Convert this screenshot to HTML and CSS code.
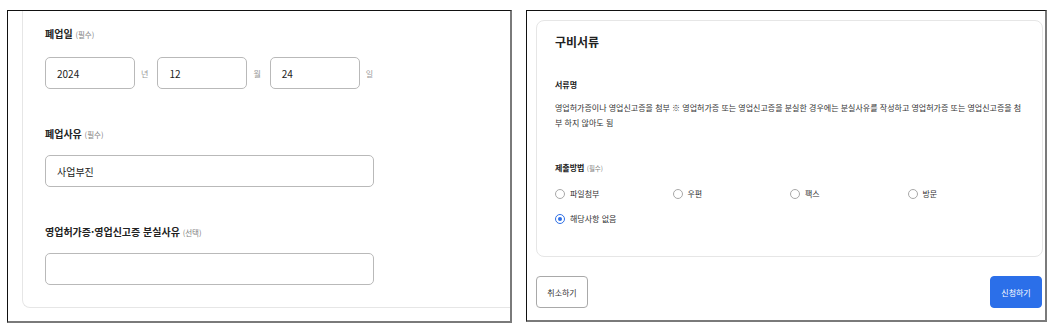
FILE: index.html
```html
<!DOCTYPE html>
<html lang="ko">
<head>
<meta charset="utf-8">
<link rel="stylesheet" href="styles.css">
</head>
<body>
<div class="page">
  <section class="panel panel-left">
    <div class="form-card">
      <div class="field field-first">
        <div class="label">폐업일 <span class="req">(필수)</span></div>
        <div class="date-row">
          <div class="input input-short">2024</div><span class="unit">년</span>
          <div class="input input-short">12</div><span class="unit">월</span>
          <div class="input input-short">24</div><span class="unit">일</span>
        </div>
      </div>
      <div class="field">
        <div class="label">폐업사유 <span class="req">(필수)</span></div>
        <div class="input input-wide">사업부진</div>
      </div>
      <div class="field">
        <div class="label">영업허가증·영업신고증 분실사유 <span class="req">(선택)</span></div>
        <div class="input input-wide"></div>
      </div>
    </div>
  </section>
  <section class="panel panel-right">
    <div class="doc-card">
      <h2 class="doc-title">구비서류</h2>
      <div class="sub-label">서류명</div>
      <p class="doc-text">영업허가증이나 영업신고증을 첨부 ※ 영업허가증 또는 영업신고증을 분실한 경우에는 분실사유를 작성하고 영업허가증 또는 영업신고증을 첨부 하지 않아도 됨</p>
      <div class="sub-label method-label">제출방법 <span class="req-sm">(필수)</span></div>
      <div class="radio-grid">
        <div class="radio"><span class="circle"></span>파일첨부</div>
        <div class="radio"><span class="circle"></span>우편</div>
        <div class="radio"><span class="circle"></span>팩스</div>
        <div class="radio"><span class="circle"></span>방문</div>
        <div class="radio"><span class="circle checked"></span>해당사항 없음</div>
      </div>
    </div>
    <div class="actions">
      <button class="btn btn-cancel">취소하기</button>
      <button class="btn btn-submit">신청하기</button>
    </div>
  </section>
</div>
</body>
</html>
```
FILE: styles.css
```css
* { box-sizing: border-box; }
html, body { margin: 0; padding: 0; background: #fff; }
body {
  font-family: "Noto Sans CJK KR", "Noto Sans", sans-serif;
  color: #222;
  width: 1056px;
  height: 336px;
  overflow: hidden;
}
.page {
  display: flex;
  align-items: flex-start;
  padding: 10px 0 0 7px;
  gap: 14px;
}
.panel {
  border-top: 1px solid #111;
  border-left: 1px solid #111;
  border-right: 2px solid #7a7a7a;
  border-bottom: 2px solid #7a7a7a;
  background: #fff;
  overflow: hidden;
}
.panel-left {
  width: 505px;
  height: 313px;
  padding-left: 14px;
}
.form-card {
  height: 297px;
  border-left: 1px solid #e6e6e6;
  border-bottom: 1px solid #e6e6e6;
  border-bottom-left-radius: 8px;
  padding: 16px 0 0 22px;
}
.field { margin-bottom: 38px; }
.label {
  font-size: 10px;
  font-weight: 700;
  line-height: 14px;
  height: 14px;
  margin-bottom: 14px;
  color: #222;
  white-space: nowrap;
}
.field-first .label { margin-bottom: 16px; }
.req {
  font-size: 7.5px;
  font-weight: 400;
  color: #808080;
}
.date-row {
  display: flex;
  align-items: center;
}
.input {
  height: 32px;
  border: 1px solid #b9b9b9;
  border-radius: 5px;
  padding: 0 11px;
  display: flex;
  align-items: center;
  font-size: 10px;
  color: #222;
  background: #fff;
}
.input-short { width: 90px; }
.input-wide { width: 329px; }
.unit {
  font-size: 8px;
  color: #999;
  margin: 0 9px 0 6px;
}
.panel-right {
  width: 521px;
  height: 312px;
  padding: 9px 2px 0 9px;
}
.doc-card {
  height: 237px;
  border: 1px solid #e6e6e6;
  border-radius: 8px;
  padding: 12px 16px 0 18px;
}
.doc-title {
  margin: 0;
  font-size: 12px;
  font-weight: 700;
  line-height: 17px;
  color: #222;
}
.sub-label {
  font-size: 8px;
  font-weight: 700;
  line-height: 12px;
  color: #222;
}
.doc-title + .sub-label { margin-top: 29px; }
.doc-text {
  margin: 9px 0 0;
  font-size: 8px;
  line-height: 15px;
  color: #333;
}
.method-label { margin-top: 32px; }
.req-sm {
  font-size: 6.5px;
  font-weight: 400;
  color: #808080;
}
.radio-grid {
  display: grid;
  grid-template-columns: repeat(4, 117.5px);
  row-gap: 13px;
  margin-top: 14px;
}
.radio {
  display: flex;
  align-items: center;
  font-size: 8px;
  line-height: 12px;
  color: #333;
}
.circle {
  width: 10px;
  height: 10px;
  border: 1px solid #a8a8a8;
  border-radius: 50%;
  margin-right: 5px;
  display: flex;
  align-items: center;
  justify-content: center;
}
.circle.checked { border-color: #2e6fe6; }
.circle.checked::after {
  content: "";
  width: 4px;
  height: 4px;
  border-radius: 50%;
  background: #2e6fe6;
}
.actions {
  display: flex;
  justify-content: space-between;
  margin-top: 19px;
  padding-right: 1px;
}
.btn {
  font-family: "Noto Sans CJK KR", "Noto Sans", sans-serif;
  font-size: 8px;
  height: 32px;
  width: 52px;
  border-radius: 4px;
  padding: 0;
  cursor: pointer;
}
.btn-cancel {
  background: #fff;
  color: #333;
  border: 1.5px solid #a9a9a9;
}
.btn-submit {
  background: #2b6fe9;
  color: #fff;
  border: 1px solid #2b6fe9;
}
```
